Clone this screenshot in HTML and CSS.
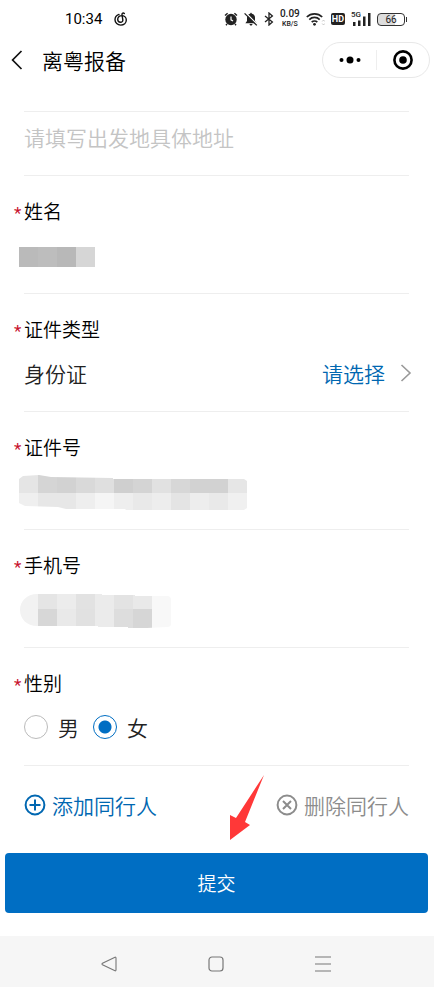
FILE: index.html
```html
<!DOCTYPE html>
<html lang="zh-CN">
  <head>
    <meta charset="utf-8">
    <meta name="viewport" content="width=device-width, initial-scale=1">
    <title>离粤报备</title>
    <link rel="stylesheet" href="styles.css">
  </head>
  <body>
    <div class="status-bar">
      <span class="clock">10:34</span>
      <svg class="music" width="14" height="14" viewBox="0 0 14 14" fill="none" stroke="#111" stroke-width="1.4" stroke-linecap="round">
        <path d="M5 2.4C2.6 3.3 1 5.200 1 7.700c0 3.200 2.600 5.400 5.700 5.400 3.200 0 5.600-2.200 5.600-5.100 0-2.700-2.200-4.400-4.700-4.400-2.300 0-3.900 1.600-3.900 3.700 0 1.800 1.200 3 2.800 3 1.500 0 2.500-1 2.300-2.500L8 2.500C7.800 1 9.400.500 10.300 1.500" />
      </svg>
      <div class="status-icons">
        <svg width="14" height="14" viewBox="0 0 14 14">
          <circle cx="7" cy="7.500" r="5.700" fill="#222" />
          <path d="M1 3.600 3.600 1.200M13 3.600 10.400 1.200M3 12 2 13.300M11 12l1 1.300" stroke="#222" stroke-width="1.400" />
          <path d="M7 4.500v3.300l2 1.300" fill="none" stroke="#fff" stroke-width="1.200" />
        </svg>
        <svg width="14" height="14" viewBox="0 0 14 14">
          <path d="M7 .6 8 1.800c2 .5 3 2 3 4V9l1.600 2.200H1.400L3 9V5.800c0-2 1-3.500 3-4zM5.500 12h3c-.2 1-.8 1.500-1.500 1.500S5.700 13 5.500 12z" fill="#222" />
          <path d="M1.600.8 13.600 12.800" stroke="#fff" stroke-width="1.400" />
          <path d="M.6 1.400 12.800 13.400" stroke="#222" stroke-width="1.300" />
        </svg>
        <svg width="10" height="14" viewBox="0 0 10 14" fill="none" stroke="#222" stroke-width="1.300">
          <path d="M1 4l7.400 6L5 13V1l3.400 3L1 10" />
        </svg>
        <span class="speed"><span>0.09</span><small>KB/S</small></span>
        <svg width="19" height="14" viewBox="0 0 19 14" fill="none" stroke="#222" stroke-width="1.700">
          <path d="M.8 5c4.300-4.300 11.100-4.300 15.400 0M3.300 7.600c2.900-2.900 7.500-2.900 10.400 0M5.700 10.200c1.600-1.600 4-1.600 5.600 0" />
          <circle cx="8.500" cy="12.300" r="1.400" fill="#222" stroke="none" />
          <path d="M16.200 9.500 17.500 8l1.300 1.500M16.200 11.500l1.300 1.500 1.300-1.500" stroke="#bbb" stroke-width=".8" />
        </svg>
        <span class="hd">HD</span>
        <span class="signal">
          <small>5G</small>
          <svg width="20" height="14" viewBox="0 0 20 14" fill="#222">
            <path d="M2 10h2.500v4H2zM7 8.500h2.500V14H7zM12 4.500h2.500V14H12zM17 1h2.500v13H17z" />
          </svg>
        </span>
        <span class="battery">66</span>
      </div>
    </div>

    <header class="title-bar">
      <button type="button" class="back" aria-label="返回">
        <svg width="12" height="20" viewBox="0 0 12 20" fill="none" stroke="#111" stroke-width="1.700">
          <path d="M10.500 1 1.600 10l8.900 9" />
        </svg>
      </button>
      <h1>离粤报备</h1>
      <div class="capsule">
        <button type="button" aria-label="更多">
          <svg width="22" height="8" viewBox="0 0 22 8">
            <circle cx="2.500" cy="4" r="2" />
            <circle cx="11" cy="4" r="3.500" />
            <circle cx="19.500" cy="4" r="2" />
          </svg>
        </button>
        <button type="button" aria-label="关闭">
          <svg width="20" height="20" viewBox="0 0 20 20">
            <circle cx="10" cy="10" r="8.600" fill="none" stroke="#000" stroke-width="2.600" />
            <circle cx="10" cy="10" r="3.800" />
          </svg>
        </button>
      </div>
    </header>

    <form class="report-form">
      <div class="fields">
        <div class="address">
          <input type="text" id="address" placeholder="请填写出发地具体地址" aria-label="出发地具体地址">
        </div>

        <div class="field">
          <div class="label">姓名</div>
          <div class="value">
            <svg class="mask" width="76" height="20" viewBox="0 0 76 20" shape-rendering="crispEdges">
              <path d="M0 0h19v20H0z" fill="#bababa" />
              <path d="M19 0h19v20H19z" fill="#bdbdbd" />
              <path d="M38 0h19v20H38z" fill="#b8b8b8" />
              <path d="M57 0h19v20H57z" fill="#d6d6d6" />
            </svg>
          </div>
        </div>

        <div class="field">
          <label class="label" for="idType">证件类型</label>
          <div class="value">
            <span>身份证</span>
            <span class="picker">
              <select id="idType">
                <option>请选择</option>
              </select>
              <svg width="12" height="18" viewBox="0 0 12 18" fill="none" stroke="#999" stroke-width="1.600">
                <path d="M1.500 1l8.500 8-8.500 8" />
              </svg>
            </span>
          </div>
        </div>

        <div class="field">
          <div class="label">证件号</div>
          <div class="value">
            <svg class="mask" width="228" height="36" viewBox="0 0 228 36">
              <clipPath id="idShape">
                <path d="M0 4 4 1 20 0l12 2 62 1v1h131l3 2v27l-3 2H107l-1-1H47l-8-2-33-1-6-3z" />
              </clipPath>
              <g clip-path="url(#idShape)" shape-rendering="crispEdges">
                <path d="M0 0h19v18H0z" fill="#e5e5e5" />
                <path d="M19 0h19v18H19z" fill="#d5d5d5" />
                <path d="M38 0h19v18H38z" fill="#d2d2d2" />
                <path d="M57 0h19v18H57z" fill="#d9d9d9" />
                <path d="M76 0h19v18H76z" fill="#dfdfdf" />
                <path d="M95 0h19v18H95z" fill="#cfcfcf" />
                <path d="M114 0h19v18h-19z" fill="#d4d4d4" />
                <path d="M133 0h19v18h-19z" fill="#e1e1e1" />
                <path d="M152 0h19v18h-19z" fill="#d7d7d7" />
                <path d="M171 0h38v18h-38z" fill="#d2d2d2" />
                <path d="M209 0h19v18h-19z" fill="#e6e6e6" />
                <path d="M0 18h19v18H0z" fill="#efefef" />
                <path d="M19 18h38v18H19z" fill="#e7e7e7" />
                <path d="M57 18h19v18H57z" fill="#eee" />
                <path d="M76 18h19v18H76z" fill="#f5f5f5" />
                <path d="M95 18h19v18H95z" fill="#eee" />
                <path d="M114 18h19v18h-19z" fill="#e9e9e9" />
                <path d="M133 18h19v18h-19z" fill="#ededed" />
                <path d="M152 18h19v18h-19z" fill="#e4e4e4" />
                <path d="M171 18h19v18h-19z" fill="#ededed" />
                <path d="M190 18h19v18h-19z" fill="#e9e9e9" />
                <path d="M209 18h19v18h-19z" fill="#f0f0f0" />
              </g>
            </svg>
          </div>
        </div>

        <div class="field">
          <div class="label">手机号</div>
          <div class="value">
            <svg class="mask" width="152" height="34" viewBox="0 0 152 34">
              <clipPath id="phoneShape">
                <path d="M1 16C1 7 8 0 18 0h65v1h33v1h32q4 0 4 4v24q0 3-4 3l-20 1h-19v-1H79v-1H18C8 32 1 25 1 16z" />
              </clipPath>
              <g clip-path="url(#phoneShape)" shape-rendering="crispEdges">
                <path d="M0 0h19v34H0z" fill="#f2f2f2" />
                <path d="M19 0h19v15H19z" fill="#e5e5e5" />
                <path d="M38 0h19v15H38z" fill="#ececec" />
                <path d="M57 0h19v15H57z" fill="#e2e2e2" />
                <path d="M76 0h19v15H76z" fill="#ebebeb" />
                <path d="M95 0h19v15H95z" fill="#e3e3e3" />
                <path d="M114 0h19v15h-19z" fill="#e9e9e9" />
                <path d="M19 15h19v19H19z" fill="#d7d7d7" />
                <path d="M38 15h19v19H38z" fill="#e9e9e9" />
                <path d="M57 15h19v19H57z" fill="#e1e1e1" />
                <path d="M76 15h19v19H76z" fill="#ebebeb" />
                <path d="M95 15h19v19H95z" fill="#ddd" />
                <path d="M114 15h19v19h-19z" fill="#d6d6d6" />
                <path d="M133 0h19v34h-19z" fill="#f8f8f8" />
              </g>
            </svg>
          </div>
        </div>

        <div class="field" role="radiogroup" aria-labelledby="genderLabel">
          <div class="label" id="genderLabel">性别</div>
          <div class="value genders">
            <label><input type="radio" name="gender" value="male">男</label>
            <label><input type="radio" name="gender" value="female" checked>女</label>
          </div>
        </div>

        <div class="actions">
          <button type="button" class="add">
            <svg width="22" height="22" viewBox="0 0 22 22" fill="none" stroke="currentColor" stroke-width="2">
              <circle cx="11" cy="11" r="9.400" />
              <path d="M11 5.500v11M5.500 11h11" />
            </svg>
            添加同行人
          </button>
          <button type="button" class="remove">
            <svg width="22" height="22" viewBox="0 0 22 22" fill="none" stroke="currentColor" stroke-width="2">
              <circle cx="11" cy="11" r="9.400" />
              <path d="M7 7l8 8M15 7l-8 8" />
            </svg>
            删除同行人
          </button>
          <!-- red pointer over the submit button -->
          <svg class="pointer" width="34" height="66" viewBox="0 0 34 66" fill="#ff3838">
            <path d="M34 0 15 47l5 3L0 65V40l6 3z" />
          </svg>
        </div>
      </div>
      <button type="submit" class="submit">提交</button>
    </form>

    <nav class="system-nav">
      <button type="button" aria-label="后退">
        <svg width="16" height="16" viewBox="0 0 16 16" fill="none" stroke="#777" stroke-width="1.100">
          <path d="M14 1.200 1.500 7.200q-1 .8 0 1.600L14 14.800q1 .2 1-1V2.200q0-1.200-1-1z" />
        </svg>
      </button>
      <button type="button" aria-label="主页">
        <svg width="16" height="16" viewBox="0 0 16 16" fill="none" stroke="#777" stroke-width="1.200">
          <rect x="1" y="1" width="14" height="14" rx="3" />
        </svg>
      </button>
      <button type="button" aria-label="最近任务">
        <svg width="16" height="16" viewBox="0 0 16 16" stroke="#777" stroke-width="1.200">
          <path d="M0 1h16M0 8h16M0 15h16" />
        </svg>
      </button>
    </nav>
  </body>
</html>
```

FILE: styles.css
```css
*,
*::before,
*::after {
  box-sizing: border-box;
}
body {
  margin: 0;
  min-height: 100vh;
  display: flex;
  flex-direction: column;
  background: #fff;
  color: #000;
  font-family: "Noto Sans CJK SC", sans-serif;
  font-weight: 350;
  font-size: 21px;
  line-height: 30px;
}
svg {
  display: block;
  flex-shrink: 0;
}
button,
input,
select {
  margin: 0;
  padding: 0;
  border: none;
  background: transparent;
  color: inherit;
  font: inherit;
  appearance: none;
}
button {
  cursor: pointer;
}

/* Status bar */
.status-bar {
  display: flex;
  align-items: center;
  height: 38px;
  padding: 0 29px 0 65px;
  color: #222;
  font-family: Roboto, sans-serif;
  font-weight: 500;
  line-height: 16px;
}
.clock {
  color: #000;
  font-size: 15px;
  font-weight: 400;
}
.music {
  margin-left: 12px;
}
.status-icons {
  display: flex;
  align-items: center;
  gap: 6px;
  margin-left: auto;
}
.speed {
  display: flex;
  flex-direction: column;
  align-items: center;
  font-size: 10px;
  line-height: 10px;
}
.speed small {
  font-size: 7px;
}
.hd {
  padding: 0 1px;
  border-radius: 2px;
  background: #222;
  color: #fff;
  font-size: 9px;
  font-weight: 700;
  line-height: 12px;
}
.signal {
  position: relative;
}
.signal small {
  position: absolute;
  top: -5px;
  left: 0;
  font-size: 8px;
}
.battery {
  position: relative;
  width: 28px;
  border: 1px solid #333;
  border-radius: 4px;
  background: linear-gradient(90deg, #ddd 66%, #fff 66%);
  font-size: 10px;
  font-weight: 400;
  line-height: 11px;
  text-align: center;
}
.battery::after {
  content: "";
  position: absolute;
  top: 3px;
  right: -3px;
  width: 1px;
  height: 5px;
  background: #333;
}

/* Title bar */
.title-bar {
  display: flex;
  align-items: center;
  height: 43px;
  padding: 0 4px 0 11px;
}
.back {
  margin-right: 19px;
}
h1 {
  margin: 0;
  font-size: 21px;
  font-weight: 350;
}
.capsule {
  display: flex;
  width: 108px;
  height: 36px;
  margin-left: auto;
  border: 1px solid #e8e8e8;
  border-radius: 18px;
}
.capsule button {
  flex: 1;
  display: flex;
  align-items: center;
  justify-content: center;
}
.capsule button + button::before {
  content: "";
  width: 1px;
  height: 20px;
  margin-right: auto;
  background: #eee;
}
.capsule button + button svg {
  margin-right: auto;
}

/* Form */
.fields {
  margin-top: 30px;
  padding: 0 25px 0 24px;
}
.address {
  padding: 10px 0 23px;
  border-top: 1px solid #eee;
  border-bottom: 1px solid #eee;
}
.address input {
  display: block;
  width: 100%;
  height: 30px;
}
.address input::placeholder {
  color: #c4c4c4;
  opacity: 1;
}
.field {
  padding: 23px 0 22px;
  border-bottom: 1px solid #eee;
}
.label {
  display: flex;
  align-items: center;
  margin-bottom: 16px;
  font-size: 19px;
  line-height: 24px;
}
.label::before {
  content: "*";
  width: 10px;
  height: 20px;
  margin-left: -10px;
  color: #c8102e;
  font-family: Roboto, sans-serif;
  font-size: 17px;
  font-weight: 400;
}
.value {
  display: flex;
  align-items: center;
  height: 32px;
  color: #222;
}
.mask {
  margin-top: 4px;
  margin-left: -5px;
}
.picker {
  display: flex;
  align-items: center;
  gap: 15px;
  margin-left: auto;
  margin-right: -3px;
  color: #0067b1;
}
.genders {
  gap: 14px;
}
.genders label {
  display: flex;
  align-items: center;
  gap: 10px;
}
.genders input {
  width: 24px;
  height: 24px;
  border: 1px solid #bbb;
  border-radius: 50%;
}
.genders input:checked {
  border-color: #006ec3;
  background: radial-gradient(circle, #006ec3 6px, #fff 7px);
}
.actions {
  position: relative;
  display: flex;
  justify-content: space-between;
  padding: 24px 0 33px;
}
.actions button {
  display: flex;
  align-items: center;
  gap: 6px;
}
.add {
  color: #0067b1;
}
.remove {
  color: #8c8c8c;
}
.pointer {
  position: absolute;
  top: 9px;
  left: 206px;
}
.submit {
  display: block;
  width: calc(100% - 11px);
  height: 60px;
  margin: 0 6px 23px 5px;
  border-radius: 4px;
  background: #006ec3;
  color: #fff;
  font-size: 19px;
}

/* System navigation */
.system-nav {
  flex: 1;
  display: flex;
  align-items: center;
  justify-content: center;
  gap: 91px;
  min-height: 51px;
  padding: 4px 3px 0 0;
  background: #f6f6f6;
}
```
